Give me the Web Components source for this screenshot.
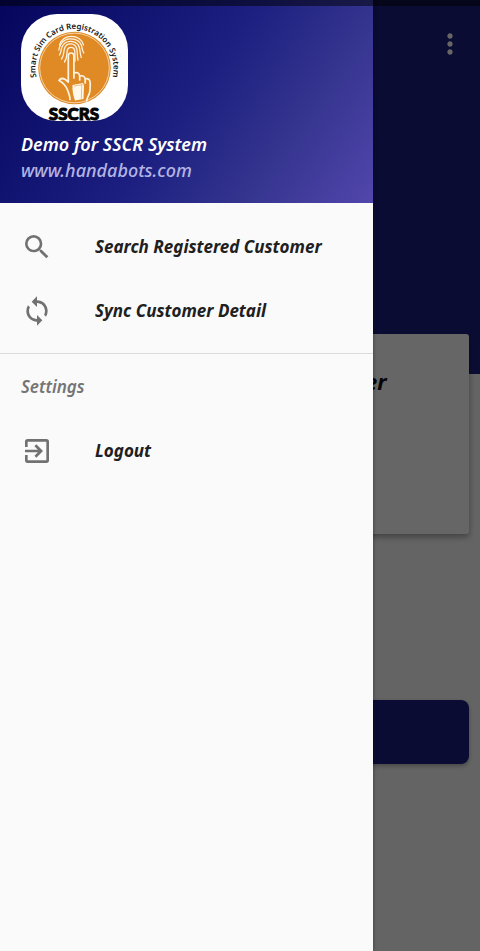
<!DOCTYPE html>
<html lang="en">
<head>
<meta charset="utf-8">
<meta name="viewport" content="width=device-width, initial-scale=1">
<title>SSCR System</title>
<style>
    html, body {
        margin: 0;
        min-height: 100%;
    }

    body {
        font-family: "Noto Sans", "Open Sans", sans-serif;
        font-style: italic;
        font-weight: 600;
        background: #fff;
    }
</style>
</head>
<body>
<app-shell>
    <home-screen slot="screen"></home-screen>
    <nav-drawer slot="drawer">
        <drawer-header slot="header">
            <span slot="title">Demo for SSCR System</span>
            <a slot="link" href="#">www.handabots.com</a>
        </drawer-header>
        <drawer-item icon="search">Search Registered Customer</drawer-item>
        <drawer-item icon="sync">Sync Customer Detail</drawer-item>
        <drawer-group label="Settings">
            <drawer-item icon="exit">Logout</drawer-item>
        </drawer-group>
    </nav-drawer>
</app-shell>

<script>
const ICONS = {
    search: 'M15.5 14h-.79l-.28-.27A6.47 6.47 0 0 0 16 9.5 6.5 6.5 0 1 0 9.5 16c1.61 0 3.09-.59 4.23-1.57l.27.28v.79l5 4.99L20.49 19l-4.99-5zm-6 0C7.01 14 5 11.99 5 9.5S7.01 5 9.5 5 14 7.01 14 9.5 11.99 14 9.5 14z',
    sync: 'M12 4V1L8 5l4 4V6c3.31 0 6 2.69 6 6 0 1.01-.25 1.97-.7 2.8l1.46 1.46A7.93 7.93 0 0 0 20 12c0-4.42-3.58-8-8-8zm0 14c-3.31 0-6-2.69-6-6 0-1.01.25-1.97.7-2.8L5.24 7.74A7.93 7.93 0 0 0 4 12c0 4.42 3.58 8 8 8v3l4-4-4-4v3z',
    exit: 'M10.09 15.59L11.5 17l5-5-5-5-1.41 1.41L12.67 11H3v2h9.67l-2.58 2.59zM19 3H5a2 2 0 0 0-2 2v4h2V5h14v14H5v-4H3v4a2 2 0 0 0 2 2h14a2 2 0 0 0 2-2V5a2 2 0 0 0-2-2z',
    more: 'M12 8c1.1 0 2-.9 2-2s-.9-2-2-2-2 .9-2 2 .9 2 2 2zm0 2c-1.1 0-2 .9-2 2s.9 2 2 2 2-.9 2-2-.9-2-2-2zm0 6c-1.1 0-2 .9-2 2s.9 2 2 2 2-.9 2-2-.9-2-2-2z'
};

class AppShell extends HTMLElement {
    connectedCallback() {
        this.attachShadow({ mode: 'open' });
        this.shadowRoot.innerHTML = `
            <style>
                :host {
                    display: block;
                    position: relative;
                    min-height: 100vh;
                    overflow: hidden;
                }

                .scrim {
                    position: absolute;
                    inset: 0;
                    background: rgba(0, 0, 0, 0.6);
                }

                .drawer {
                    position: absolute;
                    inset: 0 107px 0 0;
                }

                .status {
                    position: absolute;
                    inset: 0 0 auto 0;
                    height: 6px;
                    background: rgba(0, 0, 0, 0.5);
                }
            </style>
            <slot name="screen"></slot>
            <div class="scrim"></div>
            <div class="drawer"><slot name="drawer"></slot></div>
            <div class="status"></div>
        `;
    }
}

class HomeScreen extends HTMLElement {
    connectedCallback() {
        this.attachShadow({ mode: 'open' });
        this.shadowRoot.innerHTML = `
            <style>
                :host {
                    display: flex;
                    flex-direction: column;
                    min-height: 100vh;
                    background: linear-gradient(#1c1f80 374px, #fafafa 374px);
                }

                header {
                    display: flex;
                    justify-content: flex-end;
                    padding: 28px 14px;
                }

                button {
                    border: 0;
                    padding: 0;
                    background: none;
                    color: #fff;
                }

                .more svg {
                    display: block;
                    width: 32px;
                    height: 32px;
                    fill: currentColor;
                }

                .card {
                    box-sizing: border-box;
                    min-height: 200px;
                    margin: 246px 11px 0;
                    padding: 31px 16px;
                    border-radius: 3px;
                    background: #fff;
                    box-shadow: 0 3px 6px rgba(0, 0, 0, 0.35);
                    text-align: center;
                }

                h2 {
                    margin: 0;
                    font-size: 22px;
                    line-height: 32px;
                    font-weight: 700;
                    color: #111;
                }

                .action {
                    height: 64px;
                    margin: 166px 11px 0;
                    border-radius: 8px;
                    background: #1c1f80;
                    box-shadow: 0 2px 4px rgba(0, 0, 0, 0.3);
                }
            </style>
            <header>
                <button class="more" type="button" aria-label="More options">
                    <svg viewBox="0 0 24 24"><path d="${ICONS.more}"/></svg>
                </button>
            </header>
            <section class="card"><h2>Search Registered Customer</h2></section>
            <button class="action" type="button" aria-label="Search"></button>
        `;
    }
}

class NavDrawer extends HTMLElement {
    connectedCallback() {
        this.attachShadow({ mode: 'open' });
        this.shadowRoot.innerHTML = `
            <style>
                :host {
                    display: block;
                    height: 100%;
                    background: #fafafa;
                    box-shadow: 0 0 4px rgba(0, 0, 0, 0.4);
                }

                nav {
                    padding-top: 12px;
                }
            </style>
            <slot name="header"></slot>
            <nav><slot></slot></nav>
        `;
    }
}

class DrawerHeader extends HTMLElement {
    connectedCallback() {
        this.attachShadow({ mode: 'open' });
        this.shadowRoot.innerHTML = `
            <style>
                :host {
                    display: flex;
                    flex-direction: column;
                    padding: 14px 21px 20px;
                    background: linear-gradient(125deg, #05055c 0%, #10126f 25%, #1c1f80 50%, #35358f 75%, #5246ac 100%);
                    color: #fff;
                    font-size: 18px;
                    line-height: 26px;
                }

                sscrs-logo {
                    margin-bottom: 10px;
                }

                ::slotted(a) {
                    color: #b4b4e2;
                    text-decoration: none;
                    font-weight: 500;
                }
            </style>
            <sscrs-logo></sscrs-logo>
            <slot name="title"></slot>
            <slot name="link"></slot>
        `;
    }
}

class SscrsLogo extends HTMLElement {
    connectedCallback() {
        this.attachShadow({ mode: 'open' });
        this.shadowRoot.innerHTML = `
            <style>
                :host {
                    display: block;
                    width: 107px;
                    height: 107px;
                    border-radius: 36px;
                    background: #fff;
                    font-style: normal;
                }

                svg {
                    display: block;
                    width: 100%;
                    height: 100%;
                    overflow: visible;
                }

                .arc {
                    font: 600 8px "Noto Sans", sans-serif;
                    fill: #151515;
                }

                .name {
                    font: 900 17px Lato, sans-serif;
                    fill: #050505;
                    stroke: #050505;
                    stroke-width: 1;
                }
            </style>
            <svg viewBox="0 0 107 107">
                <defs>
                    <path id="ring" d="M20 74 A39 39 0 1 1 87 74"/>
                </defs>
                <circle cx="53.5" cy="54" r="36.300" fill="#e08a26"/>
                <circle cx="53.5" cy="54" r="34.800" fill="none" stroke="#fbe6c6" stroke-width=".8"/>
                <text class="arc" text-anchor="middle"><textPath href="#ring" startOffset="50%">Smart Sim Card Registration System</textPath></text>
                <g fill="none" stroke="#fff3df" stroke-width="1.3" stroke-linecap="round" stroke-linejoin="round">
                    <!-- fingerprint -->
                    <path d="M38.500 31c3-11.500 21-11.500 24 0"/>
                    <path d="M37.800 36c.5-3 1.200-4 2-5.500 4-7.500 17-7.500 20.500.500 1.200 3 .5 5 2.500 8"/>
                    <path d="M38.500 41c2-3 1.300-5 2.300-7.500 3-8.500 15.500-8 17.700.500.8 3 .3 5.500 1.800 9.500"/>
                    <path d="M40.500 45c3-4 1.800-7 3-10.500 2-6.500 10.800-6 12.300.500.8 3.500.2 7 1.200 11"/>
                    <path d="M43.500 48c3-4 2-8 2.900-12 1-3.500 6.200-3.500 7.200 0 .6 3 .2 7 .4 11"/>
                    <!-- pointing hand -->
                    <g stroke-width="1.700">
                        <path d="M47.300 68V42c0-4 5.600-4 5.600 0v17c4-1.500 5.600 1 5.800 3 3.500-1 5.300 1 5.500 3 3-1 5 .5 5 4 0 5 .3 9-1.500 12-1.400 2.500-1.700 3-2 6M47.300 68l-3-2.500c-2.500-1.500-5-1-6.300 1 5 2.500 7 5.500 8.700 10 1 3 2.300 5 2.300 9"/>
                        <path d="M52.900 58v6M58.700 62v4M64.200 65v4"/>
                    </g>
                </g>
                <path d="M51.500 71l10.500-2 1 2.500-.5 13.500-8.500 1.500c-1.500-4-3-9-2.500-15.500z" fill="#fff8ea"/>
                <path d="M53 72l8.500-1.200M60.800 70l-.5 15" fill="none" stroke="#e08a26" stroke-width=".5"/>
                <text class="name" x="53" y="106" text-anchor="middle">SSCRS</text>
            </svg>
        `;
    }
}

class DrawerItem extends HTMLElement {
    connectedCallback() {
        this.attachShadow({ mode: 'open' });
        this.shadowRoot.innerHTML = `
            <style>
                :host {
                    display: block;
                }

                button {
                    display: flex;
                    align-items: center;
                    gap: 42px;
                    width: 100%;
                    height: 64px;
                    padding: 0 21px;
                    border: 0;
                    background: none;
                    color: #202020;
                    font: inherit;
                    font-size: 17px;
                    line-height: 24px;
                    font-weight: 700;
                    text-align: left;
                    white-space: nowrap;
                }

                svg {
                    flex: none;
                    width: 32px;
                    height: 32px;
                    fill: #717171;
                }
            </style>
            <button type="button">
                <svg viewBox="0 0 24 24"><path d="${ICONS[this.getAttribute('icon')]}"/></svg>
                <span><slot></slot></span>
            </button>
        `;
    }
}

class DrawerGroup extends HTMLElement {
    connectedCallback() {
        this.attachShadow({ mode: 'open' });
        this.shadowRoot.innerHTML = `
            <style>
                :host {
                    display: block;
                    margin-top: 10px;
                    border-top: 1px solid #dcdcdc;
                }

                h3 {
                    margin: 0;
                    padding: 21px 21px 20px;
                    color: #757575;
                    font-size: 17px;
                    line-height: 24px;
                    font-weight: 600;
                }
            </style>
            <h3>${this.getAttribute('label')}</h3>
            <slot></slot>
        `;
    }
}

customElements.define('app-shell', AppShell);
customElements.define('home-screen', HomeScreen);
customElements.define('nav-drawer', NavDrawer);
customElements.define('sscrs-logo', SscrsLogo);
customElements.define('drawer-header', DrawerHeader);
customElements.define('drawer-item', DrawerItem);
customElements.define('drawer-group', DrawerGroup);
</script>
</body>
</html>
